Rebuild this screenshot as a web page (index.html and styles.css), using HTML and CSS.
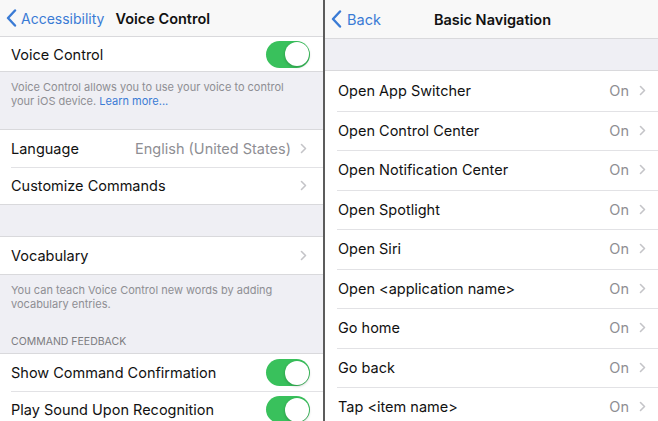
FILE: index.html
```html
<!DOCTYPE html>
<html lang="en">
<head>
    <meta charset="UTF-8">
    <meta name="viewport" content="width=device-width, initial-scale=1.0">
    <title>Voice Control</title>
    <link rel="stylesheet" href="styles.css">
</head>
<body>
    <div class="screen left">
        <div class="navbar">
            <div class="back">
                <svg class="back-icon" width="11" height="18" viewBox="0 0 11 18"><polyline points="9,1.5 2,9 9,16.5" fill="none" stroke="#3a7bd5" stroke-width="2.4" stroke-linecap="round" stroke-linejoin="round"/></svg>
                <span>Accessibility</span>
            </div>
            <div class="title">Voice Control</div>
        </div>

        <div class="group">
            <div class="row first-row">
                <span class="label">Voice Control</span>
                <div class="toggle"><div class="knob"></div></div>
            </div>
        </div>
        <div class="footer footer-a">
            Voice Control allows you to use your voice to control your iOS device. <span class="link">Learn more...</span>
        </div>

        <div class="group">
            <div class="row">
                <span class="label">Language</span>
                <span class="value">English (United States)</span>
                <svg class="chevron" width="7" height="11" viewBox="0 0 7 11"><polyline points="1.5,1.5 5.5,5.5 1.5,9.5" fill="none" stroke="#c4c4c8" stroke-width="1.6" stroke-linecap="round" stroke-linejoin="round"/></svg>
            </div>
            <div class="row">
                <span class="label">Customize Commands</span>
                <svg class="chevron" width="7" height="11" viewBox="0 0 7 11"><polyline points="1.5,1.5 5.5,5.5 1.5,9.5" fill="none" stroke="#c4c4c8" stroke-width="1.6" stroke-linecap="round" stroke-linejoin="round"/></svg>
            </div>
        </div>
        <div class="spacer"></div>

        <div class="group">
            <div class="row">
                <span class="label">Vocabulary</span>
                <svg class="chevron" width="7" height="11" viewBox="0 0 7 11"><polyline points="1.5,1.5 5.5,5.5 1.5,9.5" fill="none" stroke="#c4c4c8" stroke-width="1.6" stroke-linecap="round" stroke-linejoin="round"/></svg>
            </div>
        </div>
        <div class="footer footer-b">
            You can teach Voice Control new words by adding vocabulary entries.
        </div>
        <div class="section-header">COMMAND FEEDBACK</div>

        <div class="group">
            <div class="row">
                <span class="label">Show Command Confirmation</span>
                <div class="toggle"><div class="knob"></div></div>
            </div>
            <div class="row">
                <span class="label">Play Sound Upon Recognition</span>
                <div class="toggle"><div class="knob"></div></div>
            </div>
        </div>
    </div>

    <div class="screen right">
        <div class="navbar nav-tall">
            <div class="back">
                <svg class="back-icon" width="11" height="18" viewBox="0 0 11 18"><polyline points="9,1.5 2,9 9,16.5" fill="none" stroke="#3a7bd5" stroke-width="2.4" stroke-linecap="round" stroke-linejoin="round"/></svg>
                <span>Back</span>
            </div>
            <div class="title">Basic Navigation</div>
        </div>
        <div class="spacer"></div>

        <div class="group cmd-list">
            <div class="row cmd"><span class="label">Open App Switcher</span><span class="value">On</span><svg class="chevron" width="7" height="11" viewBox="0 0 7 11"><polyline points="1.5,1.5 5.5,5.5 1.5,9.5" fill="none" stroke="#c4c4c8" stroke-width="1.6" stroke-linecap="round" stroke-linejoin="round"/></svg></div>
            <div class="row cmd"><span class="label">Open Control Center</span><span class="value">On</span><svg class="chevron" width="7" height="11" viewBox="0 0 7 11"><polyline points="1.5,1.5 5.5,5.5 1.5,9.5" fill="none" stroke="#c4c4c8" stroke-width="1.6" stroke-linecap="round" stroke-linejoin="round"/></svg></div>
            <div class="row cmd"><span class="label">Open Notification Center</span><span class="value">On</span><svg class="chevron" width="7" height="11" viewBox="0 0 7 11"><polyline points="1.5,1.5 5.5,5.5 1.5,9.5" fill="none" stroke="#c4c4c8" stroke-width="1.6" stroke-linecap="round" stroke-linejoin="round"/></svg></div>
            <div class="row cmd"><span class="label">Open Spotlight</span><span class="value">On</span><svg class="chevron" width="7" height="11" viewBox="0 0 7 11"><polyline points="1.5,1.5 5.5,5.5 1.5,9.5" fill="none" stroke="#c4c4c8" stroke-width="1.6" stroke-linecap="round" stroke-linejoin="round"/></svg></div>
            <div class="row cmd"><span class="label">Open Siri</span><span class="value">On</span><svg class="chevron" width="7" height="11" viewBox="0 0 7 11"><polyline points="1.5,1.5 5.5,5.5 1.5,9.5" fill="none" stroke="#c4c4c8" stroke-width="1.6" stroke-linecap="round" stroke-linejoin="round"/></svg></div>
            <div class="row cmd"><span class="label">Open &lt;application name&gt;</span><span class="value">On</span><svg class="chevron" width="7" height="11" viewBox="0 0 7 11"><polyline points="1.5,1.5 5.5,5.5 1.5,9.5" fill="none" stroke="#c4c4c8" stroke-width="1.6" stroke-linecap="round" stroke-linejoin="round"/></svg></div>
            <div class="row cmd"><span class="label">Go home</span><span class="value">On</span><svg class="chevron" width="7" height="11" viewBox="0 0 7 11"><polyline points="1.5,1.5 5.5,5.5 1.5,9.5" fill="none" stroke="#c4c4c8" stroke-width="1.6" stroke-linecap="round" stroke-linejoin="round"/></svg></div>
            <div class="row cmd"><span class="label">Go back</span><span class="value">On</span><svg class="chevron" width="7" height="11" viewBox="0 0 7 11"><polyline points="1.5,1.5 5.5,5.5 1.5,9.5" fill="none" stroke="#c4c4c8" stroke-width="1.6" stroke-linecap="round" stroke-linejoin="round"/></svg></div>
            <div class="row cmd"><span class="label">Tap &lt;item name&gt;</span><span class="value">On</span><svg class="chevron" width="7" height="11" viewBox="0 0 7 11"><polyline points="1.5,1.5 5.5,5.5 1.5,9.5" fill="none" stroke="#c4c4c8" stroke-width="1.6" stroke-linecap="round" stroke-linejoin="round"/></svg></div>
        </div>
    </div>
</body>
</html>
```

FILE: styles.css
```css
body {
    display: flex;
    margin: 0;
    height: 421px;
    overflow: hidden;
    font-family: "Inter", "Liberation Sans", sans-serif;
    color: #111;
    background-color: #efeff4;
}

.screen {
    display: flex;
    flex-direction: column;
    background-color: #efeff4;
    overflow: hidden;
}

.left {
    width: 323px;
    border-right: 2px solid #5c5c5c;
    flex-shrink: 0;
}

.right {
    flex: 1;
}

.navbar {
    display: flex;
    align-items: center;
    height: 36px;
    padding-left: 6px;
    background-color: #f8f8f8;
    border-bottom: 1px solid #d9d9dc;
    flex-shrink: 0;
}

.nav-tall {
    height: 38px;
}

.back {
    display: flex;
    align-items: center;
    gap: 4px;
    color: #3a7bd5;
    font-size: 14px;
}

.title {
    font-weight: 600;
    font-size: 14.5px;
    margin-left: 11px;
}

.right .back {
    gap: 5px;
    font-size: 14.5px;
}

.right .title {
    margin-left: 53px;
}

.group {
    background-color: #fff;
    border-top: 1px solid #d9d9dc;
    border-bottom: 1px solid #d9d9dc;
    flex-shrink: 0;
}

.navbar + .group {
    border-top: none;
}

.row {
    display: flex;
    align-items: center;
    height: 37px;
    padding: 0 16px 0 11px;
    font-size: 14.5px;
    position: relative;
}

.row + .row::before {
    content: "";
    position: absolute;
    top: 0;
    left: 11px;
    right: 0;
    border-top: 1px solid #e2e2e5;
}

.first-row {
    height: 34px;
}

.label {
    flex: 1;
    white-space: nowrap;
}

.value {
    color: #8e8e93;
    margin-right: 9px;
}

.chevron {
    flex-shrink: 0;
}

.toggle {
    width: 44px;
    height: 27px;
    border-radius: 14px;
    background-color: #39c15c;
    display: flex;
    justify-content: flex-end;
    align-items: center;
    padding: 0 1.5px;
    box-sizing: border-box;
    margin-right: -3px;
    flex-shrink: 0;
}

.knob {
    width: 24px;
    height: 24px;
    border-radius: 50%;
    background-color: #fff;
    box-shadow: 0 1px 3px rgba(0, 0, 0, 0.25);
}

.footer {
    color: #8e8e93;
    font-size: 11px;
    line-height: 14px;
    padding: 8px 14px 0 11px;
    flex-shrink: 0;
}

.footer-a {
    height: 49px;
}

.footer-b {
    height: 46px;
}

.link {
    color: #3a7bd5;
}

.section-header {
    display: flex;
    align-items: center;
    color: #7c7c80;
    font-size: 10.5px;
    padding: 0 11px;
    height: 24px;
    flex-shrink: 0;
}

.spacer {
    height: 31px;
    flex-shrink: 0;
}

.cmd-list {
    border-top: 1px solid #d9d9dc;
}

.cmd {
    height: 39.5px;
    padding: 0 12px 0 13px;
    font-size: 14.5px;
}

.cmd + .cmd::before {
    left: 12px;
}

.cmd .value {
    margin-right: 10px;
}
```
